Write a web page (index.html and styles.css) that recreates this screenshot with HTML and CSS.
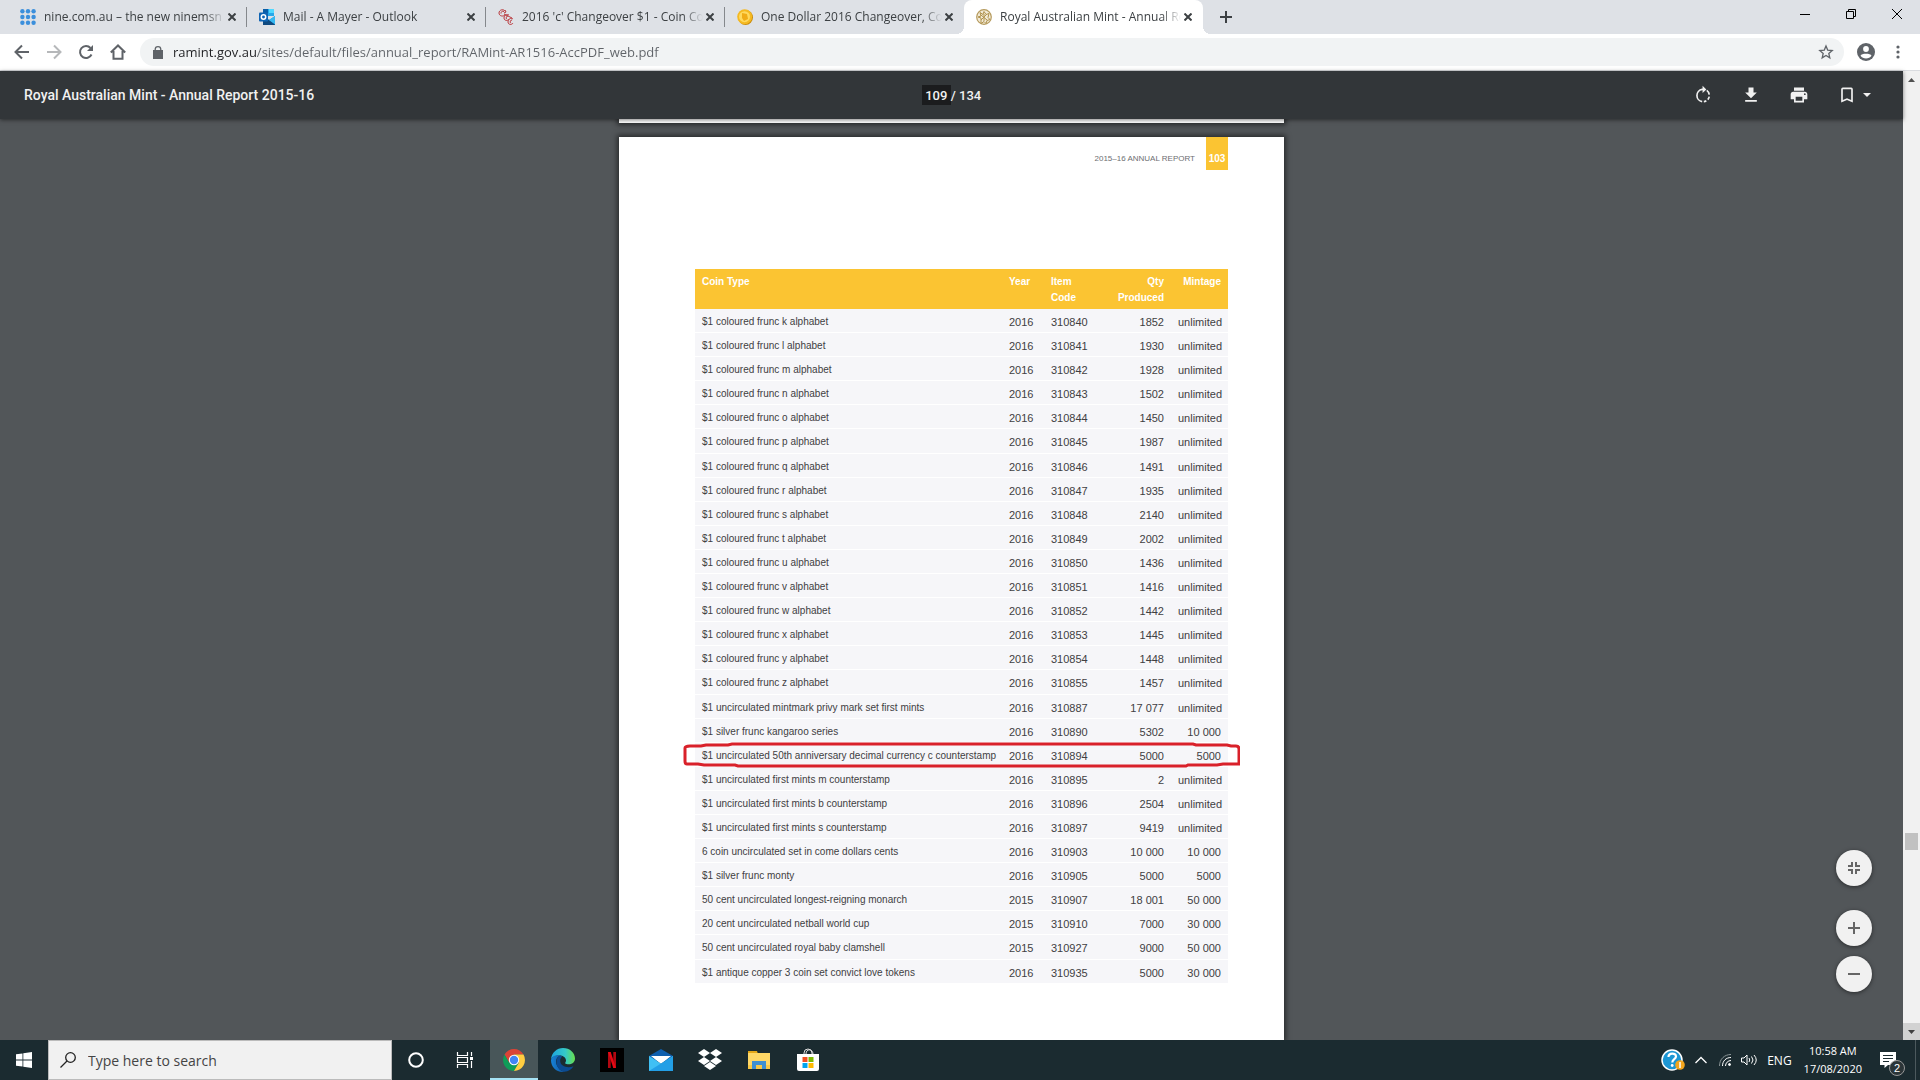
FILE: index.html
```html
<!DOCTYPE html>
<html lang="en">
<head>
    <meta charset="UTF-8">
    <meta name="viewport" content="width=device-width, initial-scale=1.0">
    <title>Royal Australian Mint - Annual Report 2015-16</title>
    <link rel="stylesheet" href="styles.css">
</head>
<body>
    <header class="tab-strip">
        <div class="tab">
            <svg class="favicon" viewBox="0 0 16 16" fill="#3b8fdc"><circle cx="2.4" cy="2.2" r="2.2"/><circle cx="8" cy="2.2" r="2.2"/><circle cx="13.6" cy="2.2" r="2.2"/><circle cx="2.4" cy="8" r="2.2"/><circle cx="8" cy="8" r="2.2"/><circle cx="13.6" cy="8" r="2.2"/><circle cx="2.4" cy="13.8" r="2.2"/><circle cx="8" cy="13.8" r="2.2"/><circle cx="13.6" cy="13.8" r="2.2"/></svg>
            <span class="tab-title">nine.com.au – the new ninemsn -</span>
            <button class="tab-close" aria-label="Close tab"><svg viewBox="0 0 8 8"><path d="M0.5 0.5l7 7M7.5 0.5l-7 7"/></svg></button>
        </div>
        <div class="tab">
            <svg class="favicon" viewBox="0 0 16 16"><path fill="#28a8ea" d="M4 0h11v7H4z"/><path fill="#0a5ea8" d="M4 0h5v4H4z"/><path fill="#50d9ff" d="M10 0h5v4h-5z"/><path fill="#1490df" d="M4 7l6 4 6-4v9H4z"/><path fill="#0f4a80" d="M4 7l12 8v1H4z"/><path fill="#35b8f1" d="M16 7v8.5L10 11z"/><rect fill="#0f64b4" y="3.500" width="9" height="9" rx="1"/><circle cx="4.500" cy="8" r="2.200" fill="none" stroke="#fff" stroke-width="1.500"/></svg>
            <span class="tab-title">Mail - A Mayer - Outlook</span>
            <button class="tab-close" aria-label="Close tab"><svg viewBox="0 0 8 8"><path d="M0.5 0.5l7 7M7.5 0.5l-7 7"/></svg></button>
        </div>
        <div class="tab">
            <svg class="favicon" viewBox="0 0 16 16" fill="none" stroke="#b9383c"><path d="M7 2C5-.5 1 1 1 4s4 4 6 2M6 2.500C4 1.500 3 3 3 4.500M7 1l1 2-2 1M11 6C9 5 6 6 6 9s4 3 5 1M10 7c-2 0-2 2-1.500 3M15 10c-2-1.500-5 0-5 3s4 3 5 1M14 11c-2 0-2 2-1.500 3M6 5l8 4"/></svg>
            <span class="tab-title">2016 'c' Changeover $1 - Coin Co</span>
            <button class="tab-close" aria-label="Close tab"><svg viewBox="0 0 8 8"><path d="M0.5 0.5l7 7M7.5 0.5l-7 7"/></svg></button>
        </div>
        <div class="tab tab-before-active">
            <svg class="favicon" viewBox="0 0 16 16"><ellipse cx="8.500" cy="8.500" rx="7.500" ry="7.500" fill="#c98a09"/><circle cx="7.700" cy="7.700" r="7.500" fill="#f5b921"/><circle cx="7.500" cy="7.700" r="5.500" fill="#ffd95e"/><path d="M5 4l5 1 1 5-4 2-2-3z" fill="#f0ac18"/></svg>
            <span class="tab-title">One Dollar 2016 Changeover, Co</span>
            <button class="tab-close" aria-label="Close tab"><svg viewBox="0 0 8 8"><path d="M0.5 0.5l7 7M7.5 0.5l-7 7"/></svg></button>
        </div>
        <div class="tab active">
            <svg class="favicon" viewBox="0 0 16 16"><circle cx="8" cy="8" r="7.300" fill="#f2ead6" stroke="#b59a5c" stroke-width="1.200"/><path d="M4 3.500l3 2 1-3 2 3 3-1-1 4 2 2-3 1-1 3-2-2-3 2V9L2 8l3-1zM8 5v7M5 6l6 5M11 5l-6 6" fill="none" stroke="#b0924d"/></svg>
            <span class="tab-title">Royal Australian Mint - Annual Re</span>
            <button class="tab-close" aria-label="Close tab"><svg viewBox="0 0 8 8"><path d="M0.5 0.5l7 7M7.5 0.5l-7 7"/></svg></button>
        </div>
        <button class="new-tab" aria-label="New tab"><svg viewBox="0 0 12 12"><path d="M6 0v12M0 6h12" stroke="#3c4043" stroke-width="2"/></svg></button>
        <div class="window-controls">
            <button aria-label="Minimise"><svg viewBox="0 0 10 10"><path d="M0 5.500h10"/></svg></button>
            <button aria-label="Restore"><svg viewBox="0 0 10 10"><path d="M.5 2.500h7v7h-7zM2.500 2.500v-2h7v7h-2"/></svg></button>
            <button aria-label="Close"><svg viewBox="0 0 10 10"><path d="M0 0l10 10M10 0L0 10"/></svg></button>
        </div>
    </header>

    <nav class="address-bar">
        <button aria-label="Back"><svg viewBox="0 0 16 16"><path d="M15 8H2M8 1.500L1.500 8 8 14.500"/></svg></button>
        <button aria-label="Forward" disabled><svg viewBox="0 0 16 16"><path d="M1 8h13M8 1.500L14.500 8 8 14.500"/></svg></button>
        <button aria-label="Reload"><svg viewBox="0 0 16 16"><path d="M13.500 10.500A6 6 0 1 1 12.500 4"/><path d="M15 1v6H9z" fill="#5f6368" stroke="none"/></svg></button>
        <button aria-label="Home"><svg viewBox="0 0 16 16"><path d="M.8 8.500L8 1.500l7.200 7M3.500 7v7.800h9V7"/></svg></button>
        <div class="omnibox">
            <svg class="lock" viewBox="0 0 10 13"><path d="M0 5h10v8H0z" fill="#5f6368"/><path d="M2.200 5.500V3.500a2.800 2.800 0 0 1 5.600 0v2" fill="none" stroke="#5f6368" stroke-width="1.300"/></svg>
            <input class="url" type="text" aria-label="Address" value="ramint.gov.au/sites/default/files/annual_report/RAMint-AR1516-AccPDF_web.pdf">
            <button aria-label="Bookmark this page"><svg viewBox="0 0 16 16"><path d="M8 2l1.700 4.100 4.500.4-3.400 2.900 1 4.400L8 11.500l-3.800 2.300 1-4.400-3.400-2.900 4.500-.4z" stroke-width="1.300"/></svg></button>
        </div>
        <button class="profile" aria-label="Profile"><svg viewBox="0 0 18 18"><circle cx="9" cy="9" r="9" fill="#5f6368" stroke="none"/><circle cx="9" cy="6" r="2.900" fill="#fff" stroke="none"/><path d="M3.500 12.800c1-2.600 10-2.600 11 0-2.600 3.600-8.400 3.600-11 0z" fill="#fff" stroke="none"/></svg></button>
        <button class="more" aria-label="Menu"><svg viewBox="0 0 4 14"><circle cx="2" cy="2" r="1.600"/><circle cx="2" cy="7" r="1.600"/><circle cx="2" cy="12" r="1.600"/></svg></button>
    </nav>

    <div class="viewer">
        <main class="pdf">
            <div class="pdf-toolbar">
                <h1>Royal Australian Mint - Annual Report 2015-16</h1>
                <div class="page-number">
                    <input type="text" value="109" aria-label="Page number"><span>/ 134</span>
                </div>
                <div class="pdf-actions">
                    <button aria-label="Rotate"><svg viewBox="0 0 24 24"><path d="M11 20A7.500 7.500 0 0 1 11 5.200h2" fill="none" stroke="#f1f1f1" stroke-width="2"/><path d="M11.500 1v8.500L16 5.300z"/><path d="M16.500 6.500a7.500 7.500 0 0 1 3 5M19.500 14a7.500 7.500 0 0 1-1.800 3.600M16 19a7.500 7.500 0 0 1-3 1" fill="none" stroke="#f1f1f1" stroke-width="2"/></svg></button>
                    <button aria-label="Download"><svg viewBox="0 0 24 24"><path d="M19 9h-4V3H9v6H5l7 7zM5 18v2h14v-2z"/></svg></button>
                    <button aria-label="Print"><svg viewBox="0 0 24 24"><path d="M19 8H5c-1.700 0-3 1.300-3 3v6h4v4h12v-4h4v-6c0-1.700-1.300-3-3-3zm-3 11H8v-5h8zm3-7a1 1 0 1 1 0-2 1 1 0 0 1 0 2zM18 3H6v4h12z"/></svg></button>
                    <button class="bookmark" aria-label="Bookmarks"><svg viewBox="0 0 24 24"><path d="M17 3H7a2 2 0 0 0-2 2v16l7-3 7 3V5a2 2 0 0 0-2-2zm0 15l-5-2.200L7 18V5h10z"/></svg><svg class="caret" viewBox="0 0 8 4"><path d="M0 0h8L4 4z"/></svg></button>
                </div>
            </div>

            <div class="pdf-pages">
                <div class="page page-previous"></div>
                <article class="page">
                    <div class="page-heading">
                        <span>2015–16 ANNUAL REPORT</span>
                        <strong>103</strong>
                    </div>
                    <table class="coins">
                        <thead>
                            <tr><th class="type">Coin Type</th><th class="year">Year</th><th class="code">Item Code</th><th class="qty">Qty Produced</th><th class="mintage">Mintage</th></tr>
                        </thead>
                        <tbody>
                            <tr><td>$1 coloured frunc k alphabet</td><td>2016</td><td>310840</td><td>1852</td><td>unlimited</td></tr>
                            <tr><td>$1 coloured frunc l alphabet</td><td>2016</td><td>310841</td><td>1930</td><td>unlimited</td></tr>
                            <tr><td>$1 coloured frunc m alphabet</td><td>2016</td><td>310842</td><td>1928</td><td>unlimited</td></tr>
                            <tr><td>$1 coloured frunc n alphabet</td><td>2016</td><td>310843</td><td>1502</td><td>unlimited</td></tr>
                            <tr><td>$1 coloured frunc o alphabet</td><td>2016</td><td>310844</td><td>1450</td><td>unlimited</td></tr>
                            <tr><td>$1 coloured frunc p alphabet</td><td>2016</td><td>310845</td><td>1987</td><td>unlimited</td></tr>
                            <tr><td>$1 coloured frunc q alphabet</td><td>2016</td><td>310846</td><td>1491</td><td>unlimited</td></tr>
                            <tr><td>$1 coloured frunc r alphabet</td><td>2016</td><td>310847</td><td>1935</td><td>unlimited</td></tr>
                            <tr><td>$1 coloured frunc s alphabet</td><td>2016</td><td>310848</td><td>2140</td><td>unlimited</td></tr>
                            <tr><td>$1 coloured frunc t alphabet</td><td>2016</td><td>310849</td><td>2002</td><td>unlimited</td></tr>
                            <tr><td>$1 coloured frunc u alphabet</td><td>2016</td><td>310850</td><td>1436</td><td>unlimited</td></tr>
                            <tr><td>$1 coloured frunc v alphabet</td><td>2016</td><td>310851</td><td>1416</td><td>unlimited</td></tr>
                            <tr><td>$1 coloured frunc w alphabet</td><td>2016</td><td>310852</td><td>1442</td><td>unlimited</td></tr>
                            <tr><td>$1 coloured frunc x alphabet</td><td>2016</td><td>310853</td><td>1445</td><td>unlimited</td></tr>
                            <tr><td>$1 coloured frunc y alphabet</td><td>2016</td><td>310854</td><td>1448</td><td>unlimited</td></tr>
                            <tr><td>$1 coloured frunc z alphabet</td><td>2016</td><td>310855</td><td>1457</td><td>unlimited</td></tr>
                            <tr><td>$1 uncirculated mintmark privy mark set first mints</td><td>2016</td><td>310887</td><td>17 077</td><td>unlimited</td></tr>
                            <tr><td>$1 silver frunc kangaroo series</td><td>2016</td><td>310890</td><td>5302</td><td>10 000</td></tr>
                            <tr class="circled"><td>$1 uncirculated 50th anniversary decimal currency c counterstamp<svg class="marker" viewBox="0 0 557 26" preserveAspectRatio="none"><path d="M2 6q0-2 5-2h11l5-1h22l4-1h461l3 1h31l4 1h5q3 0 3 3v15h-16l-6 1h-29l-2 1H55l-3-1H21l-6-1H4q-2 0-2-3z"/></svg></td><td>2016</td><td>310894</td><td>5000</td><td>5000</td></tr>
                            <tr><td>$1 uncirculated first mints m counterstamp</td><td>2016</td><td>310895</td><td>2</td><td>unlimited</td></tr>
                            <tr><td>$1 uncirculated first mints b counterstamp</td><td>2016</td><td>310896</td><td>2504</td><td>unlimited</td></tr>
                            <tr><td>$1 uncirculated first mints s counterstamp</td><td>2016</td><td>310897</td><td>9419</td><td>unlimited</td></tr>
                            <tr><td>6 coin uncirculated set in come dollars cents</td><td>2016</td><td>310903</td><td>10 000</td><td>10 000</td></tr>
                            <tr><td>$1 silver frunc monty</td><td>2016</td><td>310905</td><td>5000</td><td>5000</td></tr>
                            <tr><td>50 cent uncirculated longest-reigning monarch</td><td>2015</td><td>310907</td><td>18 001</td><td>50 000</td></tr>
                            <tr><td>20 cent uncirculated netball world cup</td><td>2015</td><td>310910</td><td>7000</td><td>30 000</td></tr>
                            <tr><td>50 cent uncirculated royal baby clamshell</td><td>2015</td><td>310927</td><td>9000</td><td>50 000</td></tr>
                            <tr><td>$1 antique copper 3 coin set convict love tokens</td><td>2016</td><td>310935</td><td>5000</td><td>30 000</td></tr>
                        </tbody>
                    </table>
                </article>
            </div>

            <div class="zoom-buttons">
                <button class="fit" aria-label="Fit to page"><svg viewBox="0 0 12 12"><path d="M0 4h4V0M8 0v4h4M0 8h4v4M8 12V8h4"/></svg></button>
                <button aria-label="Zoom in"><svg viewBox="0 0 12 12"><path d="M6 0v12M0 6h12"/></svg></button>
                <button aria-label="Zoom out"><svg viewBox="0 0 12 12"><path d="M0 6h12"/></svg></button>
            </div>
        </main>
        <div class="scrollbar">
            <svg class="arrow-up" viewBox="0 0 7 4"><path d="M0 4h7L3.500 0z" fill="#505050"/></svg>
            <div class="track"><div class="thumb"></div></div>
            <div class="arrow-down"><svg viewBox="0 0 7 4"><path d="M0 0h7L3.500 4z" fill="#404040"/></svg></div>
        </div>
    </div>

    <footer class="taskbar">
        <button class="start" aria-label="Start"><svg viewBox="0 0 16 16" fill="#fff"><path d="M0 2.300l6.500-.9v6.200H0zM7.300 1.300L16 0v7.600H7.300zM0 8.400h6.500v6.200L0 13.700zM7.300 8.400H16V16l-8.700-1.300z"/></svg></button>
        <label class="search">
            <svg viewBox="0 0 16 16" fill="none" stroke="#222" stroke-width="1.300"><circle cx="10.500" cy="5.500" r="4.800"/><path d="M7 9l-6.500 6.500"/></svg>
            <input type="text" placeholder="Type here to search">
        </label>
        <div class="apps">
            <button aria-label="Cortana"><svg viewBox="0 0 24 24"><circle cx="12" cy="12" r="6.800" fill="none" stroke="#fff" stroke-width="2"/></svg></button>
            <button aria-label="Task View"><svg viewBox="0 0 24 24" fill="none" stroke="#fff" stroke-width="1.200"><path d="M4.500 4v3.500h10V4M4.500 20v-3.500h10V20M4.500 9.500h10v5h-10zM18.500 4v4M18.500 13v7"/><path d="M17 9h3v3h-3z" fill="#fff" stroke="none"/></svg></button>
            <button class="running" aria-label="Chrome"><svg viewBox="0 0 24 24"><path fill="#db4437" d="M2.500 6.500A11 11 0 0 1 21.500 6.500H12L7.200 14.800z"/><path fill="#0f9d58" d="M2.500 6.500A11 11 0 0 0 12 23l4.800-8.200-9.600 0z"/><path fill="#ffcd40" d="M12 6.500h9.500A11 11 0 0 1 12 23l4.800-8.200z"/><circle cx="12" cy="12" r="5.200" fill="#fff"/><circle cx="12" cy="12" r="4.200" fill="#4285f4"/></svg></button>
            <button aria-label="Edge"><svg viewBox="0 0 24 24"><defs><linearGradient id="edgeTop" x2="1"><stop stop-color="#1ca4df"/><stop offset=".6" stop-color="#35c9c8"/><stop offset="1" stop-color="#69df4c"/></linearGradient><linearGradient id="edgeLow" x2="1"><stop stop-color="#1783d8"/><stop offset="1" stop-color="#10559f"/></linearGradient></defs><path fill="url(#edgeTop)" d="M0 11.500C.5 4.500 6 0 12 0c7 0 12 5 12 10.500 0 5-5 6.500-8.500 5.500-2.500-.7-.5-1.500-.5-3.500 0-3-3-5-6.500-5C4 7.500 1 9 0 11.500z"/><path fill="url(#edgeLow)" d="M0 12C1 7.500 6 6.500 9 7.500c-4 2-5 6-3 10 1.500 3.500 4 5.500 7.500 6.300C6 25 0 19.500 0 12z"/><path fill="#0c4b91" d="M9 7.500C5 10 5 14 6 17.500c2 4.500 5 6 7.500 6.300 4-.3 7-2.300 9-5.500-6 2.500-13 0-13.300-5C9 11 10 9.500 11.500 8.500z"/></svg></button>
            <button aria-label="Netflix"><svg viewBox="0 0 24 24"><path d="M0 0h24v24H0z"/><path fill="#b20710" d="M8 4h2.700v16H8zM13.300 4H16v16h-2.700z"/><path fill="#e50914" d="M8 4h2.700L16 20h-2.700z"/></svg></button>
            <button aria-label="Mail"><svg viewBox="0 0 24 24"><path fill="#0f5fae" d="M0 8l12-7 12 7v5H0z"/><path fill="#fff" d="M2 8h20l-10 8z"/><path fill="#1c8fe0" d="M0 8l12 8 12-8v15H0z"/><path fill="#40c0f4" d="M0 8l14 9L24 8v13L0 23z"/><path fill="#239fe6" d="M24 8L0 23h24z"/></svg></button>
            <button aria-label="Dropbox"><svg viewBox="0 0 24 24" fill="#fff"><path d="M6 1l6 4-6 4-6-4zM18 1l6 4-6 4-6-4zM6 9l6 4-6 4-6-4zM18 9l6 4-6 4-6-4zM12 14l6 4-6 4-6-4z"/></svg></button>
            <button aria-label="File Explorer"><svg viewBox="0 0 24 24"><path fill="#e5a718" d="M1 3h9l1 3H1z"/><path fill="#ffd766" d="M1 5h22v16H1z"/><path fill="#f9c846" d="M1 17h22v4H1z"/><path fill="#3f8fd0" d="M5 13h14v8h-4v-4H9v4H5z"/></svg></button>
            <button aria-label="Microsoft Store"><svg viewBox="0 0 24 24"><path d="M8 7V5a4 4 0 0 1 8 0v2M10 6c0-6 7-5 7 0" fill="none" stroke="#ddd"/><path fill="#fff" d="M1 6h22v15q0 2-2 2H3q-2 0-2-2z"/><path fill="#f25022" d="M6.500 9h5v5h-5z"/><path fill="#7fba00" d="M12.500 9h5v5h-5z"/><path fill="#00a4ef" d="M6.500 15h5v5h-5z"/><path fill="#ffb900" d="M12.500 15h5v5h-5z"/></svg></button>
        </div>
        <div class="tray">
            <button class="help" aria-label="Get help"><svg viewBox="0 0 24 24"><circle cx="11" cy="12" r="10" fill="#1c96d4" stroke="#fff" stroke-width="1.500"/><path d="M7.500 9c0-4.500 7.500-4.500 7.500-.5 0 2.800-3.700 2.700-3.700 6" fill="none" stroke="#fff" stroke-width="2.200"/><circle cx="11.200" cy="17.500" r="1.400" fill="#fff"/><circle cx="19" cy="17" r="4.800" fill="#f3a51c"/><path d="M19 14v6" stroke="#fff" stroke-width="1.500"/></svg></button>
            <button aria-label="Show hidden icons"><svg class="small" viewBox="0 0 12 12"><path d="M.5 9L6 3.500 11.500 9" fill="none" stroke="#fff" stroke-width="1.300"/></svg></button>
            <button aria-label="Network"><svg class="small" viewBox="0 0 12 12" fill="none" stroke="#fff"><path d="M.5 12C.5 5 5.500.5 12 .5" stroke="#8a9496"/><path d="M3.500 12c0-5 3.500-8.500 8.500-8.500M6.500 12c0-3 2.500-5.500 5.500-5.500"/><circle cx="10.500" cy="10.500" r="1" fill="#fff"/></svg></button>
            <button aria-label="Volume"><svg class="speaker" viewBox="0 0 16 12" fill="none" stroke="#fff"><path d="M.5 4H3l3-3v10L3 8H.5zM8 4q1.500 2 0 4M10.500 2.500q3 3.500 0 7M13 1q4.500 5 0 10"/></svg></button>
            <span class="language">ENG</span>
            <div class="clock"><span>10:58 AM</span><span>17/08/2020</span></div>
            <button class="notifications" aria-label="Notifications"><svg viewBox="0 0 16 16"><path d="M0 0h16v13H8l-3.500 3v-3H0z" fill="#fff"/><path d="M3 3.500h10M3 6.500h10M3 9.500h6" stroke="#1b2b30"/></svg><span class="count">2</span></button>
        </div>
    </footer>
</body>
</html>
```
FILE: styles.css
```css
* {
    box-sizing: border-box;
}
body {
    margin: 0;
    height: 100vh;
    display: flex;
    flex-direction: column;
    overflow: hidden;
    font-family: "Open Sans", "Noto Sans", sans-serif;
    font-size: 12px;
    color: #3c4043;
}
button {
    display: flex;
    align-items: center;
    justify-content: center;
    padding: 0;
    border: none;
    background: none;
    flex: none;
}
input {
    border: none;
    outline: none;
    padding: 0;
    min-width: 0;
    font: inherit;
}
svg {
    display: block;
    flex: none;
}

/* tabs */
.tab-strip {
    display: flex;
    height: 34px;
    padding-left: 8px;
    background: #dee1e6;
    flex: none;
}
.tab {
    position: relative;
    display: flex;
    align-items: center;
    width: 239px;
    padding: 0 8px 0 12px;
}
.tab::after {
    content: "";
    position: absolute;
    right: 0;
    top: 7px;
    width: 1px;
    height: 20px;
    background: #85888c;
}
.tab.active::after, .tab-before-active::after {
    display: none;
}
.tab.active {
    background: white;
    border-radius: 8px 8px 0 0;
}
/* curved feet of the active tab */
.tab.active::before {
    content: "";
    position: absolute;
    left: -8px;
    right: -8px;
    bottom: 0;
    height: 8px;
    background:
        radial-gradient(circle at 0 0, transparent 8px, white 8px) left / 8px 8px no-repeat,
        radial-gradient(circle at 100% 0, transparent 8px, white 8px) right / 8px 8px no-repeat;
}
.favicon {
    width: 16px;
    height: 16px;
    margin-right: 8px;
}
.tab-title {
    flex: 1;
    min-width: 0;
    overflow: hidden;
    white-space: nowrap;
    line-height: 20px;
    -webkit-mask-image: linear-gradient(to left, transparent, black 20px);
    mask-image: linear-gradient(to left, transparent, black 20px);
}
.tab-close {
    width: 14px;
    height: 16px;
}
.tab-close svg {
    width: 8px;
    height: 8px;
    stroke: #3c4043;
    stroke-width: 2;
}
.new-tab {
    width: 46px;
}
.new-tab svg {
    width: 12px;
    height: 12px;
}
.window-controls {
    display: flex;
    margin-left: auto;
    height: 28px;
}
.window-controls button {
    width: 46px;
}
.window-controls svg {
    width: 10px;
    height: 10px;
    fill: none;
    stroke: black;
}

/* address bar */
.address-bar {
    display: flex;
    align-items: center;
    height: 37px;
    padding: 0 12px 0 6px;
    background: white;
    border-bottom: 1px solid #dadce0;
    flex: none;
}
.address-bar button {
    width: 32px;
    height: 28px;
}
.address-bar svg {
    width: 16px;
    height: 16px;
    fill: none;
    stroke: #5f6368;
    stroke-width: 2;
}
.address-bar button:disabled {
    opacity: 0.45;
}
.omnibox {
    flex: 1;
    display: flex;
    align-items: center;
    height: 28px;
    margin-left: 6px;
    padding: 0 2px 0 13px;
    gap: 10px;
    background: #f1f3f4;
    border-radius: 14px;
}
.address-bar .lock {
    width: 10px;
    height: 13px;
}
.url {
    flex: 1;
    font-size: 13px;
    line-height: 20px;
    background: linear-gradient(to right, #202124 83px, #5f6368 83px);
    -webkit-background-clip: text;
    background-clip: text;
    -webkit-text-fill-color: transparent;
}
.address-bar .profile {
    width: 44px;
}
.address-bar .profile svg {
    width: 18px;
    height: 18px;
}
.address-bar .more {
    width: 20px;
}
.address-bar .more svg {
    width: 4px;
    height: 14px;
    fill: #5f6368;
    stroke: none;
}

/* pdf viewer */
.viewer {
    display: flex;
    flex: 1;
    min-height: 0;
}
.pdf {
    position: relative;
    flex: 1;
    display: flex;
    flex-direction: column;
    min-width: 0;
    background: #525659;
}
.pdf-toolbar {
    position: relative;
    z-index: 1;
    display: grid;
    grid-template-columns: 1fr auto 1fr;
    align-items: center;
    height: 48px;
    padding: 0 24px;
    background: #323639;
    box-shadow: 0 1px 4px rgba(0, 0, 0, 0.5);
    font-family: Roboto, sans-serif;
    font-weight: 500;
    color: #f1f1f1;
    flex: none;
}
.pdf-toolbar h1 {
    margin: 0;
    font-size: 14px;
    font-weight: 500;
}
.page-number {
    display: flex;
    align-items: center;
    font-size: 13px;
}
.page-number input {
    width: 29px;
    height: 20px;
    text-align: center;
    background: #1b1c1e;
    color: #f1f1f1;
}
.pdf-actions {
    display: flex;
    justify-content: flex-end;
    align-items: center;
    gap: 28px;
    padding-right: 8px;
}
.pdf-actions svg {
    width: 20px;
    height: 20px;
    fill: #f1f1f1;
}
.bookmark {
    gap: 6px;
}
.pdf-actions .caret {
    width: 8px;
    height: 4px;
}
.pdf-pages {
    flex: 1;
    display: flex;
    flex-direction: column;
    align-items: center;
    gap: 14px;
    min-height: 0;
    overflow: hidden;
}
.page {
    width: 665px;
    max-width: 100%;
    flex: 1 0 auto;
    padding: 0 56px 56px 76px;
    background: white;
    box-shadow: 0 0 5px 2px rgba(0, 0, 0, 0.5);
    font-family: "Helvetica Neue", "Liberation Sans", Arial, sans-serif;
    color: #414042;
}
.page-previous {
    flex: none;
    height: 4px;
    padding: 0;
}
.page-heading {
    display: flex;
    justify-content: flex-end;
    gap: 11px;
    font-size: 8px;
    line-height: 12px;
    color: #6d6e71;
}
.page-heading span {
    padding-top: 16px;
}
.page-heading strong {
    width: 22px;
    padding: 16px 0 5px;
    background: #fbc432;
    color: white;
    font-size: 10px;
    text-align: center;
}
.coins {
    width: 100%;
    height: 715px;
    margin-top: 99px;
    border-collapse: collapse;
    table-layout: fixed;
    font-size: 11px;
    line-height: 16px;
}
.coins th, .coins td {
    padding: 5px 7px 2px;
    text-align: left;
    vertical-align: top;
    white-space: nowrap;
}
.coins th {
    padding-bottom: 3px;
    background: #fbc432;
    color: white;
    font-size: 10px;
    white-space: normal;
}
.coins td {
    background: #f6f6f9;
    border-bottom: 1px solid white;
}
.coins td:first-child {
    font-size: 10px;
}
.coins .year {
    width: 42px;
}
.coins .code {
    width: 53px;
}
.coins .qty {
    width: 74px;
}
.coins .mintage {
    width: 57px;
}
.coins tr > :nth-child(4), .coins tr > :nth-child(5) {
    text-align: right;
}
.circled {
    position: relative;
}
/* hand drawn ring round the row */
.marker {
    position: absolute;
    left: -12px;
    top: 0;
    width: calc(100% + 24px);
    height: 26px;
}
.marker path {
    fill: none;
    stroke: #d9212a;
    stroke-width: 3;
}
.zoom-buttons {
    position: absolute;
    right: 31px;
    bottom: 48px;
    z-index: 1;
}
.zoom-buttons button {
    width: 36px;
    height: 36px;
    margin-top: 10px;
    border-radius: 50%;
    background: #f1f1f1;
    box-shadow: 0 1px 4px rgba(0, 0, 0, 0.5);
}
.zoom-buttons .fit {
    margin-bottom: 24px;
}
.zoom-buttons svg {
    width: 12px;
    height: 12px;
    fill: none;
    stroke: #666;
    stroke-width: 2;
}
.scrollbar {
    display: flex;
    flex-direction: column;
    align-items: center;
    width: 17px;
    background: #f1f1f1;
}
.scrollbar svg {
    width: 7px;
    height: 4px;
}
.arrow-up {
    margin: 7px 0 6px;
}
.track {
    flex: 1;
    align-self: stretch;
    display: flex;
    flex-direction: column;
    justify-content: flex-end;
    padding: 0 2px 173px;
}
.thumb {
    height: 17px;
    background: #c1c1c1;
}
.arrow-down {
    align-self: stretch;
    display: flex;
    align-items: center;
    justify-content: center;
    height: 17px;
    background: #d2d2d2;
}

/* taskbar */
.taskbar {
    display: flex;
    height: 40px;
    background: #1b2b30;
    color: white;
    flex: none;
}
.start {
    width: 48px;
}
.start svg {
    width: 16px;
    height: 16px;
}
.search {
    display: flex;
    align-items: center;
    gap: 12px;
    width: 344px;
    padding: 0 11px;
    background: #f1f1f1;
    border: 1px solid #bbb;
}
.search svg {
    width: 16px;
    height: 16px;
}
.search input {
    flex: 1;
    background: none;
    font-size: 14px;
}
.search input::placeholder {
    color: #444;
    opacity: 1;
}
.apps {
    display: flex;
    gap: 1px;
}
.apps button {
    width: 48px;
    border-bottom: 2px solid transparent;
    border-top: 2px solid transparent;
}
.apps svg {
    width: 24px;
    height: 24px;
}
.apps .running {
    background: #485659;
    border-bottom-color: #a6e3f5;
    border-top-color: #485659;
}
.tray {
    display: flex;
    align-items: center;
    margin-left: auto;
    margin-right: 4px;
    padding-right: 15px;
    border-right: 1px solid #4c595d;
}
.tray button {
    width: 24px;
    height: 40px;
}
.tray .help {
    width: 32px;
}
.help svg {
    width: 24px;
    height: 24px;
}
.small {
    width: 12px;
    height: 12px;
}
.speaker {
    width: 16px;
    height: 12px;
}
.language {
    margin-left: 6px;
}
.clock {
    display: flex;
    flex-direction: column;
    align-items: center;
    margin-left: 12px;
    font-size: 11px;
    line-height: 18px;
}
.tray .notifications {
    position: relative;
    width: 24px;
    margin-left: 14px;
}
.notifications svg {
    width: 16px;
    height: 16px;
}
.count {
    position: absolute;
    right: -5px;
    bottom: 4px;
    width: 16px;
    height: 16px;
    border: 1px solid #999;
    border-radius: 50%;
    background: #2b3538;
    color: white;
    font-size: 11px;
    line-height: 14px;
    text-align: center;
}
```
